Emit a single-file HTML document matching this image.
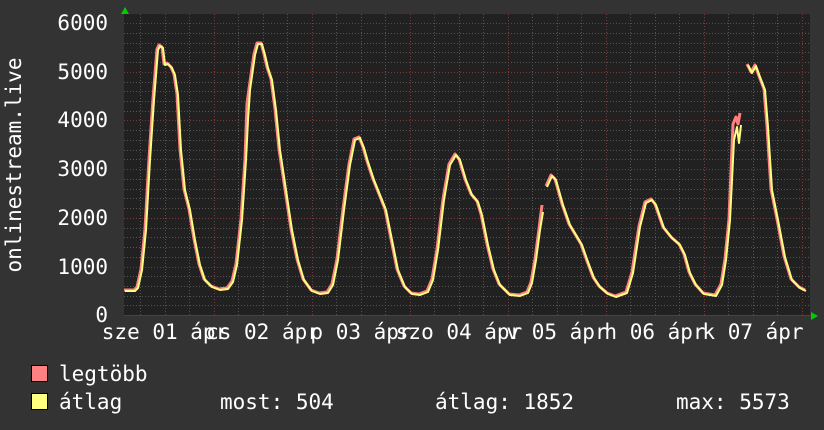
<!DOCTYPE html>
<html><head><meta charset="utf-8"><style>
html,body{margin:0;padding:0;background:#333;}
svg{display:block}
text{font-family:"DejaVu Sans Mono","Liberation Mono",monospace;font-size:21px;fill:#fff}
</style></head><body>
<svg width="824" height="430" xmlns="http://www.w3.org/2000/svg">
<rect width="824" height="430" fill="#333"/>
<rect x="124" y="14" width="686" height="302" fill="#212121"/>
<g stroke="#555" stroke-width="1" stroke-dasharray="1,2">
<path id="hm" d="M124 33.5H810M124 43.5H810M124 52.5H810M124 62.5H810M124 82.5H810M124 91.5H810M124 101.5H810M124 111.5H810M124 130.5H810M124 140.5H810M124 150.5H810M124 159.5H810M124 179.5H810M124 189.5H810M124 198.5H810M124 208.5H810M124 228.5H810M124 237.5H810M124 247.5H810M124 257.5H810M124 276.5H810M124 286.5H810M124 296.5H810M124 305.5H810"/>
<path d="M140.5 14V316M165.5 14V316M189.5 14V316M238.5 14V316M263.5 14V316M287.5 14V316M336.5 14V316M361.5 14V316M385.5 14V316M434.5 14V316M459.5 14V316M483.5 14V316M532.5 14V316M557.5 14V316M581.5 14V316M630.5 14V316M655.5 14V316M679.5 14V316M728.5 14V316M753.5 14V316M777.5 14V316"/>
</g>
<g stroke="#7a3a3a" stroke-width="1" stroke-dasharray="1,2">
<path d="M124 23.5H810M124 72.5H810M124 120.5H810M124 169.5H810M124 218.5H810M124 267.5H810"/>
<path d="M214.5 14V316M312.5 14V316M410.5 14V316M508.5 14V316M606.5 14V316M704.5 14V316M802.5 14V316"/>
</g>
<path d="M124 315.5H812" stroke="#444"/>
<g fill="none" stroke-linejoin="round">
<g stroke="#ff8080" stroke-width="3" transform="translate(-1,-1)">
<polyline points="125,291 135,291 138,288 142,270 146,230 150,160 154,100 158,50 160,46 163,48 165,65 168,64 172,68 175,75 178,95 181,150 185,190 190,210 195,240 200,265 205,280 212,287 220,290 228,289 233,282 237,265 242,220 246,160 248,105 250,90 255,55 258,44 262,44 265,55 268,68 272,80 276,110 280,150 286,190 292,230 298,260 304,280 312,291 320,294 328,293 333,285 338,260 344,210 350,165 355,140 360,138 364,148 368,162 374,180 380,195 386,210 392,240 398,270 405,287 412,294 420,295 428,292 433,280 438,250 444,200 450,165 456,155 460,160 466,180 472,195 478,202 482,215 488,245 494,270 500,285 510,295 520,296 528,293 532,283 536,260 540,230 543,206"/>
<polyline points="547,187 552,176 556,180 563,205 570,225 576,235 582,245 588,262 594,278 600,287 608,294 616,297 627,293 633,273 640,227 646,203 652,200 656,205 664,228 672,238 680,245 685,255 690,273 696,285 704,294 716,296 722,285 726,260 730,220 734,125 737,118 739,125 741,114"/>
<polyline points="748,65 752,73 756,66 760,77 765,90 768,127 772,190 778,220 785,257 792,280 800,288 806,291"/>
</g>
<g stroke="#ffff80" stroke-width="2">
<polyline points="125,291 135,291 138,288 142,270 146,230 150,160 154,100 158,50 160,46 163,48 165,65 168,64 172,68 175,75 178,95 181,150 185,190 190,210 195,240 200,265 205,280 212,287 220,290 228,289 233,282 237,265 242,220 246,160 248,120 250,90 255,55 258,44 262,44 265,55 268,68 272,80 276,110 280,150 286,190 292,230 298,260 304,280 312,291 320,294 328,293 333,285 338,260 344,210 350,165 355,140 360,138 364,148 368,162 374,180 380,195 386,210 392,240 398,270 405,287 412,294 420,295 428,292 433,280 438,250 444,200 450,165 456,155 460,160 466,180 472,195 478,202 482,215 488,245 494,270 500,285 510,295 520,296 528,293 532,283 536,260 540,230 543,212"/>
<polyline points="547,187 552,176 556,180 563,205 570,225 576,235 582,245 588,262 594,278 600,287 608,294 616,297 627,293 633,273 640,227 646,203 652,200 656,205 664,228 672,238 680,245 685,255 690,273 696,285 704,294 716,296 722,285 726,260 730,220 734,140 737,127 739,143 741,125"/>
<polyline points="748,65 752,73 756,66 760,77 765,90 768,127 772,190 778,220 785,257 792,280 800,288 806,291"/>
</g>
</g>
<path d="M121 14L125 7L129 14Z" fill="#0c0"/>
<path d="M811 312L818 316L811 320Z" fill="#0c0"/>
<g text-anchor="end">
<text x="108" y="30">6000</text>
<text x="108" y="79">5000</text>
<text x="108" y="127">4000</text>
<text x="108" y="176">3000</text>
<text x="108" y="225">2000</text>
<text x="108" y="274">1000</text>
<text x="108" y="322">0</text>
</g>
<text transform="translate(21,165) rotate(-90)" text-anchor="middle">onlinestream.live</text>
<g text-anchor="middle">
<text x="165" y="339">sze 01 ápr</text>
<text x="263" y="339">cs 02 ápr</text>
<text x="361" y="339">p 03 ápr</text>
<text x="459" y="339">szo 04 ápr</text>
<text x="557" y="339">v 05 ápr</text>
<text x="655" y="339">h 06 ápr</text>
<text x="753" y="339">k 07 ápr</text>
</g>
<rect x="31.5" y="365.5" width="16" height="16" fill="#ff8080" stroke="#000"/>
<rect x="31.5" y="393.5" width="16" height="16" fill="#ffff80" stroke="#000"/>
<text x="59" y="381">legtöbb</text>
<text x="59" y="409">átlag</text>
<text x="220" y="409">most: 504</text>
<text x="435" y="409">átlag: 1852</text>
<text x="676" y="409">max: 5573</text>
</svg>
</body></html>
